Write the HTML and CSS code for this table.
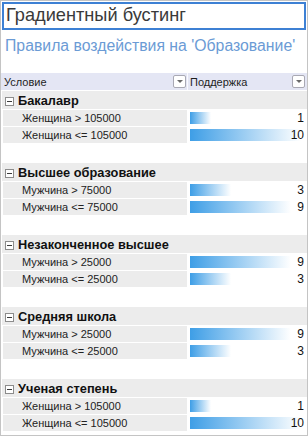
FILE: index.html
```html
<!DOCTYPE html>
<html>
<head>
<meta charset="utf-8">
<link rel="stylesheet" href="styles.css">
</head>
<body>
<div class="frame">
  <div class="title">Градиентный бустинг</div>
  <div class="subtitle">Правила воздействия на 'Образование'</div>
  <div class="thead">
    <div class="th th-cond"><span>Условие</span><span class="dd"></span></div>
    <div class="th th-sup"><span>Поддержка</span><span class="dd"></span></div>
  </div>

  <div class="group">
    <div class="ghead"><span class="toggle"></span>Бакалавр</div>
    <div class="row"><div class="cond">Женщина &gt; 105000</div><div class="sup"><div class="bar" style="width:21px"></div><span class="val">1</span></div></div>
    <div class="row"><div class="cond">Женщина &lt;= 105000</div><div class="sup"><div class="bar" style="width:111px"></div><span class="val">10</span></div></div>
  </div>

  <div class="group">
    <div class="ghead"><span class="toggle"></span>Высшее образование</div>
    <div class="row"><div class="cond">Мужчина &gt; 75000</div><div class="sup"><div class="bar" style="width:41px"></div><span class="val">3</span></div></div>
    <div class="row"><div class="cond">Мужчина &lt;= 75000</div><div class="sup"><div class="bar" style="width:101px"></div><span class="val">9</span></div></div>
  </div>

  <div class="group">
    <div class="ghead"><span class="toggle"></span>Незаконченное высшее</div>
    <div class="row"><div class="cond">Мужчина &gt; 25000</div><div class="sup"><div class="bar" style="width:101px"></div><span class="val">9</span></div></div>
    <div class="row"><div class="cond">Мужчина &lt;= 25000</div><div class="sup"><div class="bar" style="width:41px"></div><span class="val">3</span></div></div>
  </div>

  <div class="group">
    <div class="ghead"><span class="toggle"></span>Средняя школа</div>
    <div class="row"><div class="cond">Мужчина &gt; 25000</div><div class="sup"><div class="bar" style="width:101px"></div><span class="val">9</span></div></div>
    <div class="row"><div class="cond">Мужчина &lt;= 25000</div><div class="sup"><div class="bar" style="width:41px"></div><span class="val">3</span></div></div>
  </div>

  <div class="group">
    <div class="ghead"><span class="toggle"></span>Ученая степень</div>
    <div class="row"><div class="cond">Женщина &gt; 105000</div><div class="sup"><div class="bar" style="width:21px"></div><span class="val">1</span></div></div>
    <div class="row"><div class="cond">Женщина &lt;= 105000</div><div class="sup"><div class="bar" style="width:111px"></div><span class="val">10</span></div></div>
  </div>
</div>
</body>
</html>
```
FILE: styles.css
```css
* { box-sizing: border-box; }
html, body { margin: 0; padding: 0; background: #fff; }
body { font-family: "Liberation Sans", Arial, sans-serif; color: #1e1e1e; }

.frame {
  width: 308px;
  height: 436px;
  border: 1px solid #c4c4c4;
  overflow: hidden;
}

.title {
  margin: 1px 1px 0 1px;
  height: 28px;
  border: 2px solid #3d80d4;
  padding: 0 0 0 2px;
  font-size: 18.2px;
  line-height: 23px;
  color: #3a3a3a;
}

.subtitle {
  margin-top: 5px;
  padding-left: 4px;
  font-size: 15.8px;
  line-height: 21px;
  color: #6b9bd5;
  height: 38px;
}

.thead {
  display: grid;
  grid-template-columns: 186px 1fr;
  height: 17px;
  background: #e4e6f4;
  margin-bottom: 1px;
  font-size: 11px;
}
.th {
  display: flex;
  align-items: center;
  justify-content: space-between;
  padding-left: 3px;
}
.th-cond { padding-right: 1px; }
.th-sup { border-left: 1px solid #fafaff; padding-left: 2px; padding-right: 2px; }
.dd {
  width: 13px;
  height: 13px;
  background: #fff;
  border: 1px solid #a9a9b4;
  border-radius: 2px;
  display: flex;
  align-items: center;
  justify-content: center;
}
.dd::after {
  content: "";
  border-left: 3px solid transparent;
  border-right: 3px solid transparent;
  border-top: 3px solid #6a6a6a;
}

.group { margin-bottom: 20px; }

.ghead {
  height: 18px;
  margin: 0 0 1px 1px;
  background: #ececec;
  display: flex;
  align-items: center;
  font-size: 12.8px;
  font-weight: bold;
  color: #111;
  padding-left: 3px;
}
.toggle {
  width: 9px;
  height: 9px;
  border: 1px solid #8c8c8c;
  background: #fff;
  margin: 3px 4px 0 0;
  display: flex;
  align-items: center;
  justify-content: center;
}
.toggle::after {
  content: "";
  width: 5px;
  height: 1px;
  background: #3a3a3a;
}

.row {
  display: grid;
  grid-template-columns: 184px 1fr;
  height: 16px;
  margin-bottom: 1px;
  margin-left: 2px;
  font-size: 11px;
}
.cond {
  background: #ececec;
  padding-left: 19px;
  line-height: 16px;
  color: #222;
}
.sup {
  display: grid;
  align-items: center;
  padding-left: 3px;
  padding-right: 3px;
}
.bar, .val { grid-area: 1 / 1; }
.bar {
  height: 12px;
  background: linear-gradient(to right, #3e9ee6, #ffffff);
}
.val {
  justify-self: end;
  font-size: 12px;
  color: #111;
}
```
